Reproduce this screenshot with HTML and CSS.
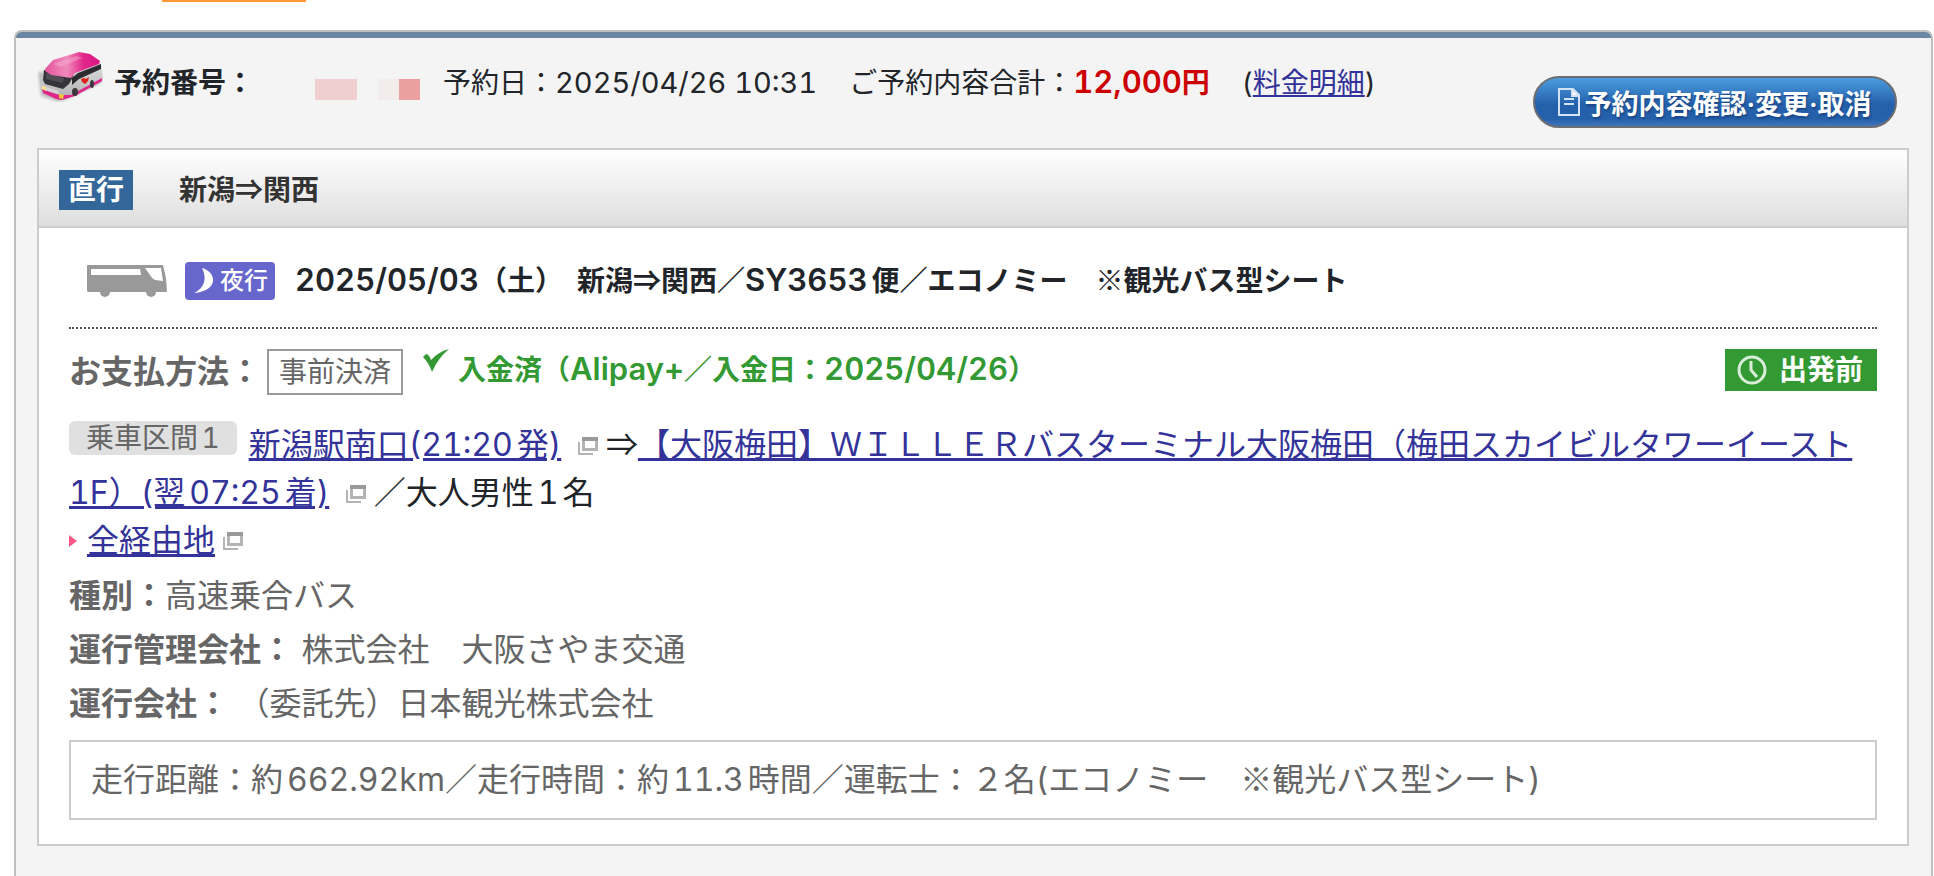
FILE: index.html
```html
<!DOCTYPE html>
<html lang="ja">

	<head>
		<meta charset="UTF-8">
		<title>予約一覧</title>
		<link rel="stylesheet" href="styles.css">
	</head>

	<body>
		<svg class="defs" width="0" height="0">
			<symbol id="win" viewBox="0 0 20 19">
				<path d="M1 5v12h14" fill="none" stroke="#b4b4b4" stroke-width="2" />
				<path d="M5.500 2v10.500h13V2z" fill="#fff" stroke="#b4b4b4" stroke-width="3" />
				<path d="M4 0h16v4H4z" fill="#999" />
			</symbol>
		</svg>

		<div class="tabs">
			<div class="tab"></div>
		</div>

		<div class="panel">
			<div class="head">
				<svg class="logo" width="66" height="50" viewBox="0 0 66 50">
					<defs>
						<linearGradient id="roof" x1="0" y1="0" x2="1" y2="0">
							<stop offset="0" stop-color="#e4559c" />
							<stop offset=".4" stop-color="#f08abb" />
							<stop offset=".7" stop-color="#e2268c" />
							<stop offset="1" stop-color="#d91580" />
						</linearGradient>
						<linearGradient id="side" x1="0" y1="0" x2="0" y2="1">
							<stop offset="0" stop-color="#ddd" />
							<stop offset="1" stop-color="#b0b0b0" />
						</linearGradient>
						<filter id="soft"><feGaussianBlur stdDeviation="1.500" /></filter>
					</defs>
					<path d="M1 20l3 24 18 6 12-5 30-14v-8z" fill="#999" opacity=".6" filter="url(#soft)" />
					<path d="M6 18L35 17l29-6 2 16-2 4-26 12-13 5-6-1-14-7z" fill="url(#side)" />
					<path d="M7 18l27 7 3-2-5 9-6 5-18-5-2-4z" fill="#35343a" />
					<path d="M9 21l18 5-1 5-17-4z" fill="#4e4d53" />
					<path d="M35 26l6-5 23-9v5L42 27l-7 6z" fill="#2c2b30" />
					<path d="M8 17L16 8 42 0l11 2 10 7-1 3-24 9-4 5-20-3-6-4z" fill="url(#roof)" />
					<path d="M16 12L40 4l5 2-22 9z" fill="#f7b0d1" opacity=".45" />
					<path d="M5 37l17 6 12 0 31-17v3L38 44l-13 4-6-1-13-6z" fill="#e0268b" />
					<path d="M6 34l16 5-1 3-14-4z" fill="#d5d3d3" />
					<path d="M5 34l4 1v4l-4-2z" fill="#ffe08a" />
					<path d="M22 42l5 1-1 4-4-1z" fill="#f4c430" />
					<ellipse cx="38" cy="40" rx="3" ry="4" fill="#3b393d" />
					<ellipse cx="55" cy="32" rx="2" ry="4" fill="#3b393d" />
					<path d="M44 27l3-1 2 1 3-2-1 4-3 3-3-2z" fill="#e0201b" />
				</svg>
				<div class="info">
					<b>予約番号：</b>
					<span class="number"><i class="m1"></i><i class="m2"></i><i class="m3"></i></span>
					<span>予約日：<span class="date">2025/04/26 10:31</span></span>
					<span>ご予約内容合計：<b class="price"><span class="num">12,000</span>円</b></span>
					<span>(<a href="#">料金明細</a>)</span>
				</div>
				<button type="button" class="btn">
					<svg width="22" height="28" viewBox="0 0 22 28" fill="none" stroke="#d3e2f5" stroke-width="2">
						<path d="M1 1h14l6 6v20H1z" />
						<path d="M14 1v7h7z" fill="#fff" />
						<path d="M6 11h10M6 16h10" />
					</svg>
					<span>予約内容確認·変更·取消</span>
				</button>
			</div>

			<div class="box">
				<div class="title">
					<span class="direct">直行</span>
					<h2>新潟<span class="sym">⇒</span>関西</h2>
				</div>

				<div class="body">
					<div class="trip">
						<svg class="bus" width="80" height="34" viewBox="0 0 80 34">
							<path d="M1 1h75l3 13 1 13q0 1-2 1H1q-1 0-1-2V2q0-1 1-1z" fill="#999" />
							<path d="M4 5h49l1 6H4z" fill="#fff" />
							<path d="M58 4h16l2 13-8-1q-3-1-5-5z" fill="#fff" />
							<circle cx="18" cy="28" r="5" fill="#999" />
							<circle cx="64" cy="28" r="5" fill="#999" />
						</svg>
						<span class="night">
							<svg width="20" height="26" viewBox="0 0 20 26">
								<path d="M8 0c15 4 17 23-8 25 11-5 13-15 8-25z" fill="#fff" />
							</svg>
							夜行
						</span>
						<h3>
							<span><span class="num">2025/05/03</span>（土）</span>
							<span>新潟<span class="sym">⇒</span>関西／<span class="num">SY3653</span>便／エコノミー　<span class="sym">※</span>観光バス型シート</span>
						</h3>
					</div>

					<div class="pay">
						<b class="label">お支払方法：</b>
						<span class="method">事前決済</span>
						<svg class="check" width="26" height="24" viewBox="0 0 26 24">
							<path d="M0 8l3-3q3 0 5 6Q15 3 26 0 15 9 9 23q-3-9-9-15z" fill="#393" />
						</svg>
						<b class="paid">入金済（<span class="num">Alipay+</span>／入金日：<span class="num">2025/04/26</span>）</b>
						<span class="status">
							<svg width="30" height="30" viewBox="0 0 30 30" fill="none" stroke="#d9eed9" stroke-width="3">
								<circle cx="15" cy="15" r="13" />
								<path d="M14 6v9l6 7" />
							</svg>
							出発前
						</span>
					</div>

					<p class="route">
						<span class="section">乗車区間1</span><a href="#">新潟駅南口(21:20発)</a>
						<svg class="win"><use href="#win" /></svg><span class="sym">⇒</span><a href="#">【大阪梅田】ＷＩＬＬＥＲバスターミナル大阪梅田（梅田スカイビルタワーイースト1F）(翌07:25着)</a>
						<svg class="win"><use href="#win" /></svg>／大人男性1名
					</p>
					<p class="stops">
						<svg class="mark" width="8" height="12" viewBox="0 0 8 12"><path d="M0 0l8 6-8 6z" fill="#ff5588" /></svg>
						<a href="#">全経由地</a>
						<svg class="win"><use href="#win" /></svg>
					</p>

					<ul class="detail">
						<li><b>種別：</b>高速乗合バス</li>
						<li><b>運行管理会社：</b> 株式会社　大阪さやま交通</li>
						<li><b>運行会社：</b> （委託先）日本観光株式会社</li>
					</ul>

					<div class="distance">走行距離：約662.92km／走行時間：約11.3時間／運転士：２名(エコノミー　<span class="sym">※</span>観光バス型シート)</div>
				</div>
			</div>
		</div>
	</body>

</html>
```

FILE: styles.css
```css
* {
	margin: 0;
	padding: 0;
	box-sizing: border-box;
}

body {
	display: flex;
	flex-direction: column;
	min-height: 100vh;
	background: #fff;
	color: #212529;
	font-family: Inter, "Noto Sans CJK JP", sans-serif;
	font-size: 28px;
	font-variant-numeric: tabular-nums;
	text-autospace: normal;
}

b,
h2,
h3 {
	font-weight: 700;
}

a {
	color: #339;
	text-decoration: underline;
}

svg {
	flex: none;
}

.defs {
	position: absolute;
}

.sym {
	font-family: "Noto Sans CJK JP", sans-serif;
	line-height: 1;
}

.num {
	font-size: 31px;
	font-weight: 600;
	line-height: 1;
}

.date {
	font-size: 29px;
	line-height: 1;
}

.tabs {
	padding-left: 162px;
}

.tab {
	width: 144px;
	height: 2px;
	background: #f93;
}

.panel {
	flex: 1;
	margin: 28px 1px 0 14px;
	padding: 0 22px 0 21px;
	background: linear-gradient(#6b86a2 6px, #f4f4f4 6px);
	border: 2px solid #c0c0c0;
	border-bottom: 0;
	border-radius: 8px 8px 0 0;
}

.head {
	display: flex;
	align-items: flex-start;
	padding: 20px 12px 20px 0;
}

.info {
	display: flex;
	flex: 1;
	gap: 32px;
	margin: 10px 0 0 11px;
	line-height: 42px;
	white-space: nowrap;
}

.number {
	display: flex;
	align-items: flex-end;
	width: 108px;
	height: 38px;
	margin: 0 -12px 0 29px;
}

.number i {
	width: 21px;
	height: 21px;
}

.number .m1 {
	width: 42px;
	background: #efcfcf;
}

.number .m2 {
	margin-left: 21px;
	background: #f2ecec;
}

.number .m3 {
	background: #e9a09e;
}

.price {
	color: #c00;
	text-autospace: no-autospace;
}

.btn {
	display: flex;
	justify-content: center;
	align-items: center;
	gap: 4px;
	width: 364px;
	height: 52px;
	margin-top: 24px;
	color: #fff;
	font-family: inherit;
	font-size: 27px;
	font-weight: 600;
	text-shadow: 1px 2px 2px #1a4685;
	white-space: nowrap;
	background: linear-gradient(#4b9de0, #2560ab 55%, #2560ab 85%, #3f74bb);
	border: 2px solid #6e6e72;
	border-radius: 26px;
}

.box {
	background: #fff;
	border: 2px solid #ccc;
}

.title {
	display: flex;
	gap: 46px;
	padding: 20px 20px 16px;
	line-height: 40px;
	background: linear-gradient(#fff, #dedede);
	border-bottom: 2px solid #ccc;
}

.title h2 {
	color: #333;
	font-size: 28px;
}

.direct {
	padding: 0 9px;
	color: #fff;
	font-weight: 600;
	background: #369;
}

.body {
	padding: 0 30px 24px;
}

.trip {
	display: flex;
	align-items: center;
	padding: 34px 0 27px 18px;
	line-height: 38px;
	border-bottom: 2px dotted #495460;
}

.trip h3 {
	display: flex;
	gap: 14px;
	font-size: 28px;
}

.night {
	display: flex;
	align-items: center;
	gap: 6px;
	width: 90px;
	margin: 0 20px 0 18px;
	padding-left: 9px;
	color: #fff;
	font-size: 24px;
	font-weight: 500;
	background: #66c;
	border-radius: 4px;
}

.pay {
	display: flex;
	align-items: flex-start;
	padding-top: 20px;
	line-height: 42px;
}

.label {
	color: #666;
	font-size: 32px;
	line-height: 46px;
}

.method {
	margin: 0 20px 0 6px;
	padding: 0 10px;
	color: #666;
	border: 2px solid #999;
}

.paid {
	margin-left: 9px;
	color: #393;
}

.status {
	display: flex;
	align-items: center;
	gap: 12px;
	margin-left: auto;
	padding: 0 14px 0 12px;
	color: #fff;
	font-weight: 600;
	background: #393;
}

.route,
.stops {
	font-size: 32px;
	line-height: 48px;
}

.route {
	margin-top: 26px;
}

.section {
	display: inline-block;
	margin-right: 12px;
	padding: 0 17px;
	color: #666;
	font-size: 28px;
	line-height: 34px;
	vertical-align: top;
	background: #e0e0e0;
	border-radius: 6px;
}

.win {
	width: 20px;
	height: 19px;
	margin: 0 8px;
}

.stops {
	display: flex;
	align-items: center;
}

.mark {
	margin-right: 10px;
}

.detail {
	margin: 4px 0 9px;
	color: #666;
	font-size: 32px;
	line-height: 54px;
	list-style: none;
}

.distance {
	padding: 0 20px;
	color: #666;
	font-size: 32px;
	line-height: 76px;
	border: 2px solid #ccc;
}
```
